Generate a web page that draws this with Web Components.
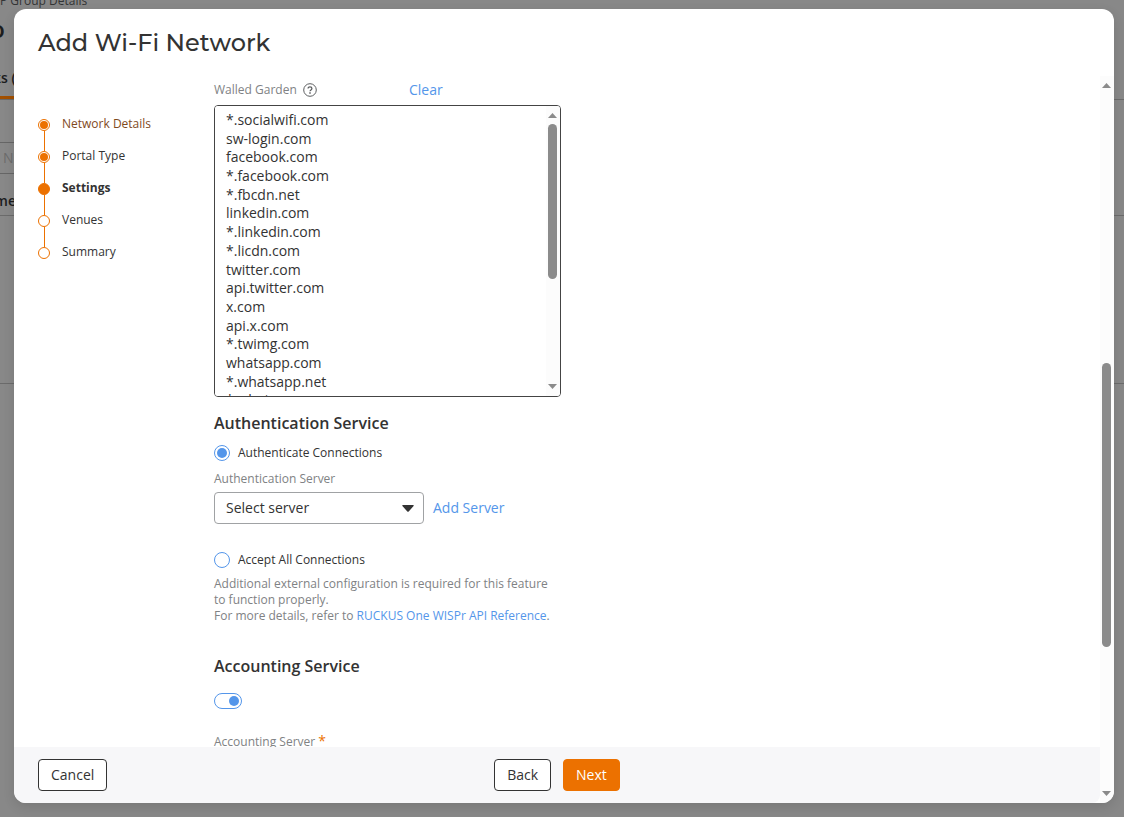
<!DOCTYPE html>
<html lang="en">
<head>
<meta charset="utf-8">
<meta name="viewport" content="width=device-width, initial-scale=1">
<title>Add Wi-Fi Network</title>
<style>
  :root {
    --orange: #ec7100;
    --blue: #5496ea;
    --ink: #333333;
    --muted: #808284;
    --thumb: #8b8b8b;
  }
  html, body { margin: 0; height: 100%; }
  body {
    font-family: "Open Sans", "Noto Sans", sans-serif;
    font-size: 12px;
    line-height: 16px;
    color: var(--ink);
    overflow: hidden;
  }
</style>
</head>
<body>
<wifi-app></wifi-app>

<template id="t-wifi-app">
  <style>
    :host { display: grid; height: 100%; background: #888; }
    page-backdrop, .front { grid-area: 1 / 1; min-height: 0; min-width: 0; }
    .front { display: grid; padding: 9px 10px 14px 14px; box-sizing: border-box; }
    wifi-dialog { min-height: 0; }
  </style>
  <page-backdrop></page-backdrop>
  <div class="front"><wifi-dialog></wifi-dialog></div>
</template>

<template id="t-page-backdrop">
  <style>
    :host { display: block; overflow: hidden; color: #1c1d1e; height: 100%; }
    div { box-sizing: border-box; display: flex; align-items: center; justify-content: flex-end; width: 16px; white-space: nowrap; overflow: hidden; }
    .crumb { height: 12px; justify-content: flex-start; overflow: visible; color: #333435; align-items: flex-start; }
    .crumb span { line-height: 2px; }
    .title { height: 34px; font-size: 24px; font-weight: 600; line-height: 34px; justify-content: flex-end; width: 5px; }
    .tab { height: 53px; padding-top: 14px; font-size: 14px; font-weight: 600; border-bottom: 3px solid #a35000; justify-content: flex-end; }
    .rule { width: 100%; height: 1px; background: #6b6b6b; }
    .search { height: 32px; margin-top: 42px; border: solid #666; border-width: 1px 0; color: #6c6c6c; font-size: 14px; justify-content: flex-start; padding-left: 3px; }
    .col { height: 41px; padding-top: 12px; font-size: 14px; font-weight: 600; justify-content: flex-end; }
    .gap { height: 167px; }
  </style>
  <div class="crumb"><span>P Group Details</span></div>
  <div class="title">o</div>
  <div class="tab">ks (</div>
  <div class="rule"></div>
  <div class="search">N</div>
  <div class="col">me</div>
  <div class="rule"></div>
  <div class="gap"></div>
  <div class="rule"></div>
</template>

<template id="t-wifi-dialog">
  <style>
    :host {
      display: grid; background: #fff; border-radius: 12px; overflow: hidden;
      grid-template: auto minmax(0, 1fr) auto / minmax(0, 1fr) 14px;
      box-shadow: 0 4px 12px rgba(0,0,0,.12);
    }
    header { grid-column: 1 / -1; padding: 18px 24px 17px; }
    h1 { margin: 0; font: 500 24px/32px Montserrat, Inter, sans-serif; }
    main { overflow: hidden; display: grid; grid-template-columns: 176px minmax(0, 1fr); padding-left: 24px; }
    step-list { margin-top: 40px; }
    scroll-bar { grid-column: 2; grid-row: 2 / 4; }
    footer {
      display: grid; grid-template-columns: 1fr auto 1fr; align-items: center;
      padding: 12px 24px; background: #f7f7f9; border-bottom-right-radius: 8px;
    }
    .mid { display: flex; gap: 12px; }
  </style>
  <header><h1>Add Wi-Fi Network</h1></header>
  <main>
    <step-list></step-list>
    <settings-form></settings-form>
  </main>
  <footer>
    <div><push-button>Cancel</push-button></div>
    <div class="mid">
      <push-button>Back</push-button>
      <push-button primary>Next</push-button>
    </div>
  </footer>
  <scroll-bar style="--before: 269fr; --size: 284fr; --after: 138fr"></scroll-bar>
</template>

<template id="t-push-button">
  <style>
    :host { display: inline-flex; }
    button {
      font: inherit; font-size: 14px; height: 32px; padding: 0 12px; cursor: pointer;
      border: 1px solid var(--ink); border-radius: 4px; background: #fff; color: var(--ink);
    }
    :host([primary]) button { background: var(--orange); border-color: var(--orange); color: #fff; }
  </style>
  <button type="button"><slot></slot></button>
</template>

<template id="t-step-list">
  <style>
    :host { display: block; }
    .steps { display: grid; }
  </style>
  <div class="steps" role="list">
    <step-item state="done" hovered>Network Details</step-item>
    <step-item state="done">Portal Type</step-item>
    <step-item state="current">Settings</step-item>
    <step-item>Venues</step-item>
    <step-item last>Summary</step-item>
  </div>
</template>

<template id="t-step-item">
  <style>
    :host { display: grid; grid-template-columns: 12px 1fr; column-gap: 12px; height: 32px; }
    .rail { display: flex; flex-direction: column; align-items: center; padding-top: 3px; }
    .dot { box-sizing: border-box; width: 12px; height: 12px; flex: none; border: 1px solid var(--orange); border-radius: 50%; padding: 1px; background: #fff; }
    .line { width: 1px; height: 20px; flex: none; background: var(--orange); }
    :host([last]) .line { display: none; }
    :host([state="done"]) .dot { background: var(--orange) content-box; }
    :host([state="current"]) .dot { background: var(--orange); }
    :host([state="current"]) .text { font-weight: 700; }
    :host([hovered]) .text { color: #7f4a1d; }
  </style>
  <span class="rail"><span class="dot"></span><span class="line"></span></span>
  <span class="text"><slot></slot></span>
</template>

<template id="t-scroll-bar">
  <style>
    :host { display: grid; box-sizing: border-box; width: 14px; background: #fcfcfc; padding: 7px 2px; grid-template-rows: 5px minmax(0, 1fr) 5px; row-gap: 6px; justify-items: start; }
    .track { display: grid; width: 9px; grid-template-rows: var(--before) var(--size) var(--after); }
    .thumb { grid-row: 2; background: var(--thumb); border-radius: 5px; }
    svg { display: block; fill: var(--thumb); }
  </style>
  <svg width="9" height="5" viewBox="0 0 9 5"><path d="M0 5 4.500 0 9 5z"/></svg>
  <div class="track"><div class="thumb"></div></div>
  <svg width="9" height="5" viewBox="0 0 9 5"><path d="M0 0h9L4.500 5z"/></svg>
</template>

<template id="t-radio-option">
  <style>
    :host { display: block; }
    label { display: flex; align-items: center; gap: 8px; }
    input {
      appearance: none; box-sizing: border-box; width: 16px; height: 16px; margin: 0; padding: 2px;
      border: 1px solid var(--blue); border-radius: 50%; background: #fff;
    }
    input:checked { background: var(--blue) content-box; }
  </style>
  <label><input type="radio"><slot></slot></label>
</template>

<template id="t-settings-form">
  <style>
    :host { display: block; max-width: 347px; padding-top: 4px; }
    .row { display: flex; align-items: center; }
    .muted { color: var(--muted); }
    .garden-head { height: 20px; }
    .garden-head .left { display: flex; align-items: center; gap: 6px; width: 195px; }
    a { color: var(--blue); text-decoration: none; }
    .big { font-size: 14px; line-height: 20px; }
    .garden { display: grid; grid-template-columns: minmax(0, 1fr) 14px; height: 290px; margin-top: 5px; border: 1px solid #444; border-radius: 4px; overflow: hidden; }
    textarea {
      box-sizing: border-box; width: 100%; height: 100%; margin: 0; padding: 5px 11px 0; border: 0; outline: 0;
      resize: none; font: inherit; font-size: 14px; line-height: 1.335; color: var(--ink);
      scrollbar-width: none; background: #fff;
    }
    h2 { margin: 0; font-size: 16px; font-weight: 600; line-height: 22px; }
    .auth { margin-top: 15px; }
    .first { margin-top: 11px; }
    .caption { display: block; }
    .cap1 { margin-top: 10px; }
    .pick { gap: 9px; margin-top: 5px; }
    .select { display: grid; align-items: center; width: 210px; }
    .select > * { grid-area: 1 / 1; }
    .select svg { justify-self: end; margin-right: 10px; pointer-events: none; }
    select {
      appearance: none; width: 100%; height: 32px; padding: 0 11px; font: inherit; font-size: 14px;
      color: var(--ink); background: #fff; border: 1px solid #a0a2a4; border-radius: 4px;
    }
    .second { margin-top: 28px; }
    p { margin: 8px 0 0; }
    .acct { margin-top: 31px; }
    .switch {
      appearance: none; display: grid; align-items: center; box-sizing: border-box; width: 28px; height: 16px;
      margin: 16px 0 0; padding: 0 2px; border: 1px solid var(--blue); border-radius: 8px; background: #fff;
    }
    .switch::before { content: ""; width: 10px; height: 10px; border-radius: 50%; background: var(--blue); }
    .switch:checked::before { justify-self: end; }
    .cap2 { margin-top: 24px; }
    .cap2 b { color: var(--orange); font-weight: 400; font-size: 14px; line-height: 16px; }
  </style>
  <div class="row garden-head">
    <div class="left">
      <label class="muted" for="garden">Walled Garden</label>
      <svg width="14" height="14" viewBox="0 0 14 14" fill="none" stroke="#5c5e60" aria-hidden="true">
        <circle cx="7" cy="7" r="6.3"/>
        <path d="M5.1 5.6C5.1 4.4 5.9 3.8 7 3.8s1.9.7 1.9 1.7c0 1.4-1.9 1.4-1.9 2.8" stroke-width="1.3"/>
        <path d="M7 9.3v1.4" stroke-width="1.5"/>
      </svg>
    </div>
    <a class="big" href="#">Clear</a>
  </div>
  <div class="garden">
    <textarea id="garden" spellcheck="false">*.socialwifi.com
sw-login.com
facebook.com
*.facebook.com
*.fbcdn.net
linkedin.com
*.linkedin.com
*.licdn.com
twitter.com
api.twitter.com
x.com
api.x.com
*.twimg.com
whatsapp.com
*.whatsapp.net
*.whatsapp.com</textarea>
    <scroll-bar style="--before: 0fr; --size: 155fr; --after: 99fr"></scroll-bar>
  </div>

  <h2 class="auth">Authentication Service</h2>
  <radio-option class="first" checked>Authenticate Connections</radio-option>
  <label class="caption muted cap1" for="server">Authentication Server</label>
  <div class="row pick">
    <div class="select">
      <select id="server"><option>Select server</option></select>
      <svg width="12" height="7" viewBox="0 0 12 7" fill="#333"><path d="M1 0h10c.8 0 1 .6.6 1L6.700 6.500c-.4.4-1 .4-1.400 0L.4 1C0 .6.2 0 1 0z"/></svg>
    </div>
    <a class="big" href="#">Add Server</a>
  </div>
  <radio-option class="second">Accept All Connections</radio-option>
  <p class="muted">Additional external configuration is required for this feature to function properly.<br>For more details, refer to <a href="#">RUCKUS One WISPr API Reference</a>.</p>

  <h2 class="acct">Accounting Service</h2>
  <input class="switch" type="checkbox" role="switch" checked aria-label="Accounting Service">
  <span class="caption muted cap2">Accounting Server <b>*</b></span>
</template>

<script>
  class TemplateElement extends HTMLElement {
    constructor() {
      super();
      const template = document.getElementById("t-" + this.localName);
      this.attachShadow({ mode: "open" }).append(template.content.cloneNode(true));
    }
  }

  // Radios live in separate shadow roots, so siblings are cleared by hand.
  class RadioOption extends TemplateElement {
    connectedCallback() {
      const input = this.shadowRoot.querySelector("input");
      input.checked = this.hasAttribute("checked");
      input.addEventListener("change", () => {
        for (const other of this.getRootNode().querySelectorAll("radio-option")) {
          if (other !== this) other.shadowRoot.querySelector("input").checked = false;
        }
      });
    }
  }

  class StepItem extends TemplateElement {
    connectedCallback() {
      this.setAttribute("role", "listitem");
    }
  }

  customElements.define("radio-option", RadioOption);
  customElements.define("step-item", StepItem);
  for (const name of ["scroll-bar", "push-button", "step-list", "settings-form", "wifi-dialog", "page-backdrop", "wifi-app"]) {
    customElements.define(name, class extends TemplateElement {});
  }
</script>
</body>
</html>
